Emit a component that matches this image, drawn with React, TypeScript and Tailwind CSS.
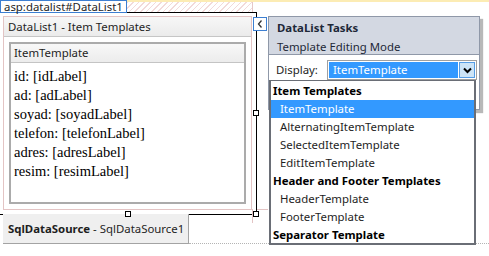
import type { ReactNode } from 'react'

const ui = 'font-["Segoe_UI","Noto_Sans",sans-serif]'

const fields = [
  ['id', 'idLabel'],
  ['ad', 'adLabel'],
  ['soyad', 'soyadLabel'],
  ['telefon', 'telefonLabel'],
  ['adres', 'adresLabel'],
  ['resim', 'resimLabel'],
]

const listItems: { text: string; head?: boolean; selected?: boolean }[] = [
  { text: 'Item Templates', head: true },
  { text: 'ItemTemplate', selected: true },
  { text: 'AlternatingItemTemplate' },
  { text: 'SelectedItemTemplate' },
  { text: 'EditItemTemplate' },
  { text: 'Header and Footer Templates', head: true },
  { text: 'HeaderTemplate' },
  { text: 'FooterTemplate' },
  { text: 'Separator Template', head: true },
]

function Handle({ className }: { className: string }) {
  return <div className={`absolute h-[6px] w-[6px] border border-black bg-white ${className}`} />
}

function Row({ children }: { children: ReactNode }) {
  return <div className="flex h-[18px] items-center">{children}</div>
}

export default function App() {
  return (
    <div className={`relative h-[256px] w-[489px] overflow-hidden whitespace-nowrap bg-white text-[11.4px] text-[#1e1e1e] ${ui}`}>
      {/* yellow strip along the top */}
      <div className="absolute left-0 right-0 top-0 h-[2px] bg-[#fcecb4]" />

      {/* designer surface */}
      <div className="flex w-[257px] flex-col">
        <div className="flex h-[12px]">
          <div className="relative z-10 flex h-[13px] items-center border border-[#3d7fd1] bg-white px-[3px] leading-[11px]">
            asp:datalist#DataList1
          </div>
          <div className="mr-[4px] mt-[2px] flex-1 border-r border-[#e6c8c8] bg-[repeating-linear-gradient(135deg,#f2dada_0_1px,#ffffff_1px_4px)]" />
        </div>

        <div className="h-[203px] border-y border-r border-black pl-[3px] pr-[4px] pt-[3px]">
          <div className="flex h-[194px] flex-col border border-[#e3c4c4] bg-white">
            <div className="flex h-[20px] items-center border-b border-[#c6c6c6] bg-[linear-gradient(#f7f7f7,#ebebeb)] pl-[4px]">
              DataList1 - Item Templates
            </div>
            <div className="mx-[5px] mb-[5px] mt-[5px] flex flex-1 flex-col border-2 border-[#ababab]">
              <div className="flex h-[19px] items-center border-b border-[#c4c4c4] bg-[linear-gradient(#f8f8f8,#ececec)] pl-[3px]">
                ItemTemplate
              </div>
              <div className="flex-1 bg-white pl-[3px] pt-[4px] font-['Liberation_Serif',serif] text-[14.5px] leading-[19px] text-black">
                {fields.map(([k, v]) => (
                  <div key={k}>
                    {k}: [{v}]
                  </div>
                ))}
              </div>
            </div>
          </div>
        </div>

        <div className="-mt-px ml-[3px] flex h-[30px] w-[186px] items-center border-b border-r border-[#a3a3a3] bg-[#efefef] pl-[5px]">
          <span className="font-bold">SqlDataSource</span>
          <span>&nbsp;- SqlDataSource1</span>
        </div>
      </div>

      {/* guides and grips */}
      <div className="absolute left-[252px] top-[209px] h-[14px] w-px bg-[#e3c4c4]" />
      <div className="absolute left-[257px] top-[209px] h-px w-[11px] bg-[#e3c4c4]" />
      <div className="absolute left-[189px] right-0 top-[243px] border-t border-dotted border-[#b4b4b4]" />
      <Handle className="left-[125px] top-[211px]" />
      <Handle className="left-[253px] top-[211px]" />
      <Handle className="left-[253px] top-[110px]" />

      {/* smart tag */}
      <div className="absolute left-[253px] top-[17px] flex h-[14px] w-[14px] items-center justify-center border border-[#3d7fd1] bg-white">
        <svg width="6" height="8" viewBox="0 0 6 8">
          <path d="M4.5 0.5 L1.5 4 L4.5 7.5" fill="none" stroke="#333" strokeWidth="1.3" />
        </svg>
      </div>

      {/* tasks panel */}
      <div className="absolute left-[268px] top-[16px] flex h-[94px] w-[212px] flex-col border border-[#8f98a8] bg-white shadow-[3px_3px_1px_rgba(0,0,0,0.28)]">
        <div className="flex h-[38px] flex-col border-b border-[#8f98a8] bg-[#d3d8e2] pl-[8px] pt-[1px] text-[#1e2838]">
          <div className="h-[19px] font-bold leading-[19px]">DataList Tasks</div>
          <div className="h-[19px] leading-[19px]">Template Editing Mode</div>
        </div>
        <div className="flex items-center pl-[7px] pt-[5px]">
          <span className="w-[51px]">Display:</span>
          <div className="flex h-[20px] w-[150px] items-center border border-[#a0a0a0] bg-white p-px">
            <div className="flex h-full flex-1 items-center bg-[#3399ff] pl-[4px] text-white">ItemTemplate</div>
            <div className="ml-px flex h-full w-[16px] items-center justify-center border border-[#569de5] bg-[#cce4f7]">
              <svg width="9" height="7" viewBox="0 0 9 7">
                <path d="M1 1.5 L4.5 5 L8 1.5" fill="none" stroke="#000" strokeWidth="2" />
              </svg>
            </div>
          </div>
        </div>
      </div>

      {/* open list */}
      <div className="absolute left-[269px] top-[80px] flex h-[165px] w-[207px] flex-col border-2 border-t border-[#6a6e76] bg-white pt-px">
        {listItems.map((it) =>
          it.head ? (
            <Row key={it.text}>
              <span className="pl-[2px] font-bold text-black">{it.text}</span>
            </Row>
          ) : (
            <div
              key={it.text}
              className={`flex h-[18px] items-center pl-[9px] ${it.selected ? 'bg-[#3399ff] text-white' : 'text-[#1e1e1e]'}`}
            >
              {it.text}
            </div>
          ),
        )}
      </div>
    </div>
  )
}
